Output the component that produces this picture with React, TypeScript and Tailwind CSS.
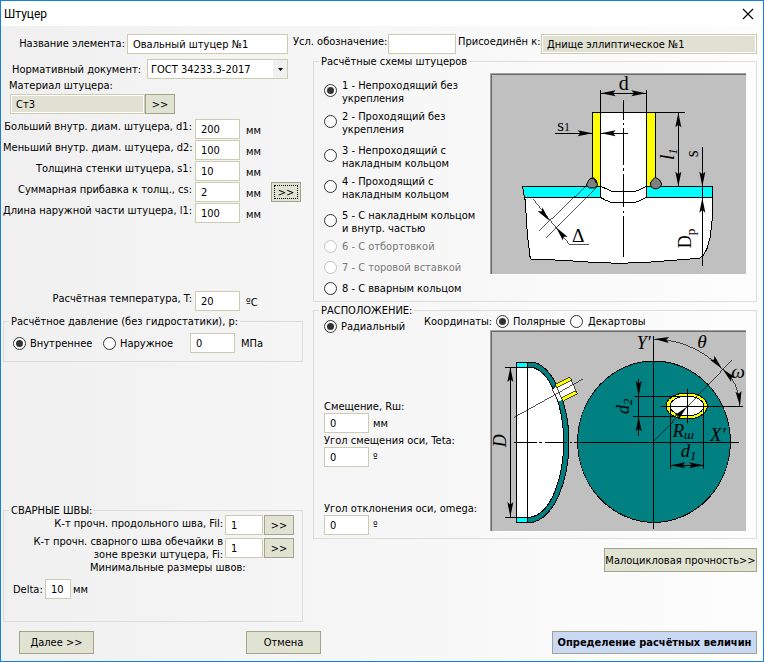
import { useState } from "react";
import type { ReactNode } from "react";

const inputClass =
  "h-5 border border-[#cbccb0] bg-white px-[5px] text-black outline-none focus:border-[#a0a18a]";
const readonlyClass =
  "h-5 border border-[#cbccb0] bg-[#e0e1d2] px-[5px] text-black outline-none shadow-[inset_0_0_0_1px_#fff]";
const buttonClass = "border border-[#a3a48c] bg-[#e0e2d2] text-black hover:bg-[#e8eadb]";
const radioClass =
  "grid size-[13px] shrink-0 appearance-none place-content-center rounded-full border border-[#333] bg-white before:size-[7px] before:rounded-full before:content-[''] checked:before:bg-[#333] disabled:border-[#c4c4c4]";

const schemes = [
  [
    { id: 1, lines: ["1 - Непроходящий без", "укрепления"] },
    { id: 2, lines: ["2 - Проходящий без", "укрепления"] },
  ],
  [
    { id: 3, lines: ["3 - Непроходящий с", "накладным кольцом"] },
    { id: 4, lines: ["4 - Проходящий с", "накладным кольцом"] },
  ],
  [
    { id: 5, lines: ["5 - С накладным кольцом", "и внутр. частью"] },
    { id: 6, lines: ["6 - С отбортовкой"], disabled: true },
  ],
  [{ id: 7, lines: ["7 - С торовой вставкой"], disabled: true }],
  [{ id: 8, lines: ["8 - С вварным кольцом"] }],
];

const sizes = [
  { id: "d1", label: "Больший внутр. диам. штуцера, d1:", value: "200" },
  { id: "d2", label: "Меньший внутр. диам. штуцера, d2:", value: "100" },
  { id: "s1", label: "Толщина стенки штуцера, s1:", value: "10" },
  { id: "cs", label: "Суммарная прибавка к толщ., cs:", value: "2", more: true },
  { id: "l1", label: "Длина наружной части штуцера, l1:", value: "100" },
];

function SizeRow({ id, label, value, unit, children }: { id: string; label: string; value: string; unit: string; children?: ReactNode }) {
  return (
    <div className="flex h-5">
      <label htmlFor={id} className="mr-[3px] w-[189px] pt-px text-right">
        {label}
      </label>
      <input id={id} defaultValue={value} className={`${inputClass} w-[45px]`} />
      <span className="mx-[6px] w-[19px] self-end pb-[2px]">{unit}</span>
      {children}
    </div>
  );
}

function OffsetField({ id, label, unit }: { id: string; label: string; unit: string }) {
  return (
    <div>
      <label htmlFor={id} className="block">
        {label}
      </label>
      <div className="flex items-center gap-1">
        <input id={id} defaultValue="0" className={`${inputClass} w-[45px]`} />
        <span>{unit}</span>
      </div>
    </div>
  );
}

// arrow head with its tip at x, y; angle 0 points right
function Arrow({ x, y, angle }: { x: number; y: number; angle: number }) {
  return <path d="M0 0 L-44 -9 L-36 0 L-44 9 Z" fill="#000" stroke="none" transform={`translate(${x} ${y}) rotate(${angle})`} />;
}

function NozzleDrawing() {
  return (
    <svg viewBox="12 15 771 606" className="h-[202px] w-[257px] shrink-0" role="img" aria-label="Расчётная схема">
      <rect x="12" y="15" width="771" height="606" fill="#c0c0c0" />
      <g stroke="#000" strokeWidth="3" fill="none" shapeRendering="crispEdges">
        <path d="M110 355 L343 355 L343 133 H481 V355 H679 V450 L673 505 L664 540 L652 562 L640 571 L560 577 L481 583 L400 586 L320 583 L230 577 L133 573 L124 500 L118 400 Z" fill="#fff" />
        <path d="M110 355 H343 V388 H115 Z" fill="#00ffff" />
        <path d="M481 355 H679 V388 H481 Z" fill="#00ffff" />
        <rect x="320" y="133" width="23" height="222" fill="#ffff00" />
        <rect x="481" y="133" width="27" height="222" fill="#ffff00" />
        <path d="M343 355 L358 361 L376 370 H448 L466 363 L481 355" />
        <path d="M343 388 L358 396 L374 403 H448 L466 396 L481 388" />
        <path d="M343 66 V133 M481 66 V133 M343 76 H481" />
        <path d="M207 196 H320 M343 196 H426" />
        <path d="M508 133 H597 M577 133 V355" />
        <path d="M649 237 V594" />
        <path d="M412 96 V156 M412 165 V172 M412 180 V290 M412 300 V308 M412 318 V418 M412 428 V435 M412 445 V567" />
        <path d="M302 352 L160 488 M334 355 L180 509" strokeWidth="2" />
        <path d="M142 394 L250 529 H308" strokeWidth="2" />
      </g>
      <g stroke="#000" strokeWidth="3" fill="#808080">
        <path d="M301 351 L309 335 L320 328 L331 337 L335 352 L325 360 H310 Z" />
        <path d="M313 332 L325 332 L330 345" fill="none" />
        <path d="M508 328 L521 336 L527 348 L523 357 L514 362 H504 L495 356 L493 345 L500 335 Z" />
      </g>
      <Arrow x={345} y={76} angle={180} />
      <Arrow x={480} y={76} angle={0} />
      <Arrow x={319} y={196} angle={0} />
      <Arrow x={345} y={196} angle={180} />
      <Arrow x={577} y={134} angle={-90} />
      <Arrow x={577} y={355} angle={90} />
      <Arrow x={649} y={355} angle={90} />
      <Arrow x={649} y={390} angle={-90} />
      <Arrow x={190} y={458} angle={51} />
      <Arrow x={210} y={478} angle={-129} />
      <g fill="#000" className="font-['Liberation_Serif',serif]">
        <text x="398" y="67" fontSize="60">d</text>
        <text x="214" y="188" fontSize="52">s<tspan fontSize="36">1</tspan></text>
        <text transform="translate(565 276) rotate(-90)" fontSize="60" fontStyle="italic">l<tspan fontSize="36" dy="8">1</tspan></text>
        <text transform="translate(636 268) rotate(-90)" fontSize="54">s</text>
        <text transform="translate(614 541) rotate(-90)" fontSize="54">D<tspan fontSize="40" dy="12">p</tspan></text>
        <text x="258" y="522" fontSize="58">Δ</text>
      </g>
      <path d="M13.500 621 V16.500 H783" fill="none" stroke="#a0a0a0" strokeWidth="3" />
      <path d="M16.500 618 V19.500 H780" fill="none" stroke="#696969" strokeWidth="3" />
      <path d="M12 619.500 H781.500 V15" fill="none" stroke="#fff" strokeWidth="3" />
    </svg>
  );
}

function LocationDrawing() {
  return (
    <svg viewBox="12 76 771 606" className="h-[202px] w-[257px] shrink-0" role="img" aria-label="Расположение штуцера">
      <rect x="12" y="76" width="771" height="606" fill="#c0c0c0" />
      <g stroke="#000" strokeWidth="3" fill="none" shapeRendering="crispEdges">
        <path d="M124 172 H143 C205 190 249 300 249 412 C249 530 205 635 143 652 H124 V637 H136 C195 625 233 520 233 412 C233 305 195 200 136 187 H124 Z" fill="#008080" />
        <path d="M92 187 H136 C195 200 233 305 233 412 C233 520 195 625 136 637 H92 Z" fill="#fff" />
        <rect x="92" y="172" width="32" height="15" fill="#00ffff" />
        <rect x="92" y="637" width="32" height="15" fill="#00ffff" />
        <path d="M124 172 V652" />
        <path d="M199 255 L252 219 L273 265 L219 291 Z" fill="#fff" stroke="none" />
        <path d="M208 239 L251 218 L257 226 L213 249 Z" fill="#ffff00" strokeWidth="2" />
        <path d="M226 280 L268 259 L274 267 L231 290 Z" fill="#ffff00" strokeWidth="2" />
        <path d="M255 224 L271 262 M213 248 L227 282 M199 256 L216 290 M207 241 L199 256" strokeWidth="2" />
        <path d="M85 338 L291 223" strokeWidth="2" />
        <path d="M57 187 H92 M57 637 H92 M73 187 V637" />
        <path d="M85 412 H153 M160 412 H168 M176 412 H242 M252 412 H258" />
        <ellipse cx="504" cy="411" rx="229" ry="242" fill="#008080" />
        <path d="M264 412 H760 M502 93 V672" />
        <ellipse cx="602" cy="304" rx="62" ry="39" fill="#ffff00" />
        <ellipse cx="603" cy="304" rx="50" ry="30" fill="#fff" />
        <path d="M525 304 H771 M604 252 V355" />
        <path d="M502 412 L738 166" strokeWidth="2" />
        <path d="M443 274 H602 M441 334 H560 M458 222 V393" />
        <path d="M553 310 V492 M653 310 V492 M553 482 H653" />
        <path d="M505 103 C590 106 655 140 709 193 C743 219 758 252 762 304" strokeWidth="2" />
      </g>
      <Arrow x={73} y={188} angle={-90} />
      <Arrow x={73} y={636} angle={90} />
      <Arrow x={458} y={273} angle={90} />
      <Arrow x={458} y={336} angle={-90} />
      <Arrow x={554} y={482} angle={180} />
      <Arrow x={653} y={482} angle={0} />
      <Arrow x={602} y={307} angle={-46} />
      <Arrow x={505} y={103} angle={184} />
      <Arrow x={708} y={192} angle={48} />
      <Arrow x={710} y={194} angle={-136} />
      <Arrow x={762} y={304} angle={84} />
      <g fill="#000" className="font-['Liberation_Serif',serif]" fontStyle="italic">
        <text x="452" y="134" fontSize="54">Y′</text>
        <text x="634" y="130" fontSize="58">θ</text>
        <text x="736" y="221" fontSize="58">ω</text>
        <text x="672" y="408" fontSize="56">X′</text>
        <text x="560" y="396" fontSize="56">R<tspan fontSize="40" dy="8">ш</tspan></text>
        <text x="584" y="458" fontSize="56">d<tspan fontSize="38" dy="8">1</tspan></text>
        <text transform="translate(430 328) rotate(-90)" fontSize="54">d<tspan fontSize="38" dy="8">2</tspan></text>
        <text transform="translate(59 428) rotate(-90)" fontSize="54">D</text>
      </g>
      <path d="M13.500 682 V77.500 H783" fill="none" stroke="#a0a0a0" strokeWidth="3" />
      <path d="M16.500 679 V80.500 H780" fill="none" stroke="#696969" strokeWidth="3" />
      <path d="M12 680.500 H781.500 V76" fill="none" stroke="#fff" strokeWidth="3" />
    </svg>
  );
}

export default function App() {
  const [scheme, setScheme] = useState(1);
  const [pressure, setPressure] = useState("in");
  const [coords, setCoords] = useState("polar");

  return (
    <div className="flex min-h-screen flex-col border border-[#1a7fd4] bg-linear-to-r from-[#f0f0f0] to-[#fdfdfd] font-['DejaVu_Sans_Condensed','DejaVu_Sans',sans-serif] text-[11px] leading-[13px] whitespace-nowrap text-black">
      <header className="flex h-[25px] items-center justify-between bg-white pr-[9px] pl-[3px]">
        <h1 className="font-[Roboto,'Noto_Sans',sans-serif] text-[12px] leading-4">Штуцер</h1>
        <button type="button" aria-label="Закрыть" className="size-3">
          <svg viewBox="0 0 12 12" className="size-3" stroke="#000" strokeWidth="1.100">
            <path d="M1 1 L11 11 M11 1 L1 11" />
          </svg>
        </button>
      </header>

      <main className="flex flex-1 flex-col pr-[6px] pb-[7px]">
        <div className="flex pt-2">
          <label htmlFor="name" className="mr-[2px] w-[124px] pt-[3px] text-right">Название элемента:</label>
          <input id="name" defaultValue="Овальный штуцер №1" className={`${inputClass} w-[161px]`} />
          <label htmlFor="mark" className="w-[100px] pt-px pl-[5px]">Усл. обозначение:</label>
          <input id="mark" className={`${inputClass} w-[68px]`} />
          <label htmlFor="parent" className="w-[85px] pt-px pl-[2px]">Присоединён к:</label>
          <input id="parent" readOnly value="Днище эллиптическое №1" className={`${readonlyClass} min-w-0 flex-1`} />
        </div>

        <div className="flex gap-[10px] pt-px pl-[2px]">
          <div className="w-[300px] shrink-0">
            <div className="flex items-center gap-[6px] pt-1">
              <label htmlFor="norm" className="w-[138px] text-right">Нормативный документ:</label>
              <div className="relative">
                <select id="norm" className={`${inputClass} w-[141px] appearance-none pl-[3px]`}>
                  <option>ГОСТ 34233.3-2017</option>
                </select>
                <span className="pointer-events-none absolute top-px right-px grid h-[18px] w-[14px] place-content-center bg-[#f0f0f0]">
                  <svg viewBox="0 0 5 3" className="h-[3px] w-[5px]">
                    <path d="M0 0 H5 L2.500 3 Z" />
                  </svg>
                </span>
              </div>
            </div>

            <label htmlFor="material" className="block pl-[6px]">Материал штуцера:</label>
            <div className="flex pt-[2px] pl-[7px]">
              <input id="material" readOnly value="Ст3" className={`${readonlyClass} w-[135px]`} />
              <button type="button" aria-label="Выбрать материал" className={`${buttonClass} h-5 w-[30px]`}>&gt;&gt;</button>
            </div>

            <div className="flex flex-col gap-px pt-[5px]">
              {sizes.map((s) => (
                <SizeRow key={s.id} id={s.id} label={s.label} value={s.value} unit="мм">
                  {s.more && (
                    <button type="button" aria-label="Рассчитать прибавку" className={`${buttonClass} h-5 w-[30px] p-[2px]`}>
                      <span className="flex h-full items-center justify-center border border-dotted border-black">&gt;&gt;</span>
                    </button>
                  )}
                </SizeRow>
              ))}
            </div>

            <div className="pt-[68px]">
              <SizeRow id="temp" label="Расчётная температура, T:" value="20" unit="ºC" />
            </div>

            <fieldset className="mt-1 border border-[#dcdcdc] px-[9px] pb-2">
              <legend className="-ml-1 px-[2px]">Расчётное давление (без гидростатики), p:</legend>
              <div className="flex items-center pt-[5px]">
                <label className="flex w-[90px] items-center gap-1">
                  <input type="radio" name="pressure" className={radioClass} checked={pressure === "in"} onChange={() => setPressure("in")} />
                  Внутреннее
                </label>
                <label className="flex w-[87px] items-center gap-1">
                  <input type="radio" name="pressure" className={radioClass} checked={pressure === "out"} onChange={() => setPressure("out")} />
                  Наружное
                </label>
                <input aria-label="Давление" defaultValue="0" className={`${inputClass} w-[45px]`} />
                <span className="pl-[6px]">МПа</span>
              </div>
            </fieldset>

            <fieldset className="mt-[142px] border border-[#dcdcdc] pr-2 pb-[22px] pl-[9px]">
              <legend className="-ml-1 px-[2px]">СВАРНЫЕ ШВЫ:</legend>
              <div className="-mt-[2px] flex justify-end">
                <label htmlFor="fil" className="pt-[2px] pr-[2px]">К-т прочн. продольного шва, Fil:</label>
                <input id="fil" defaultValue="1" className={`${inputClass} mr-px w-[38px]`} />
                <button type="button" aria-label="Рассчитать Fil" className={`${buttonClass} h-5 w-[30px]`}>&gt;&gt;</button>
              </div>
              <div className="flex items-center justify-end">
                <label htmlFor="fi" className="pr-[2px] text-right">
                  К-т прочн. сварного шва обечайки в
                  <br />
                  зоне врезки штуцера, Fi:
                </label>
                <input id="fi" defaultValue="1" className={`${inputClass} mr-px w-[38px]`} />
                <button type="button" aria-label="Рассчитать Fi" className={`${buttonClass} h-5 w-[30px]`}>&gt;&gt;</button>
              </div>
              <p className="pl-[77px]">Минимальные размеры швов:</p>
              <div className="flex items-center pt-[5px]">
                <label htmlFor="delta" className="w-8">Delta:</label>
                <input id="delta" defaultValue="10" className={`${inputClass} w-[26px]`} />
                <span className="pl-[2px]">мм</span>
              </div>
            </fieldset>
          </div>

          <div className="flex flex-1 flex-col">
            <fieldset className="border border-[#dcdcdc] pr-[9px] pb-[6px] pl-[10px]">
              <legend className="-ml-[5px] px-[2px]">Расчётные схемы штуцеров</legend>
              <div className="flex justify-between pt-[5px]">
                <div className="flex flex-col gap-2 pt-[6px]">
                  {schemes.map((group) => (
                    <div key={group[0].id} className="flex flex-col gap-[5px]">
                      {group.map((item) => (
                        <label key={item.id} className={`flex gap-[5px] ${item.disabled ? "text-[#787878]" : ""}`}>
                          <input
                            type="radio"
                            name="scheme"
                            className={`${radioClass} ${item.lines.length > 1 ? "mt-[5px]" : ""}`}
                            disabled={item.disabled}
                            checked={scheme === item.id}
                            onChange={() => setScheme(item.id)}
                          />
                          <span>
                            {item.lines.map((line) => (
                              <span key={line} className="block">{line}</span>
                            ))}
                          </span>
                        </label>
                      ))}
                    </div>
                  ))}
                </div>
                <NozzleDrawing />
              </div>
            </fieldset>

            <fieldset className="mt-[2px] border border-[#dcdcdc] pr-[9px] pb-[3px] pl-[10px]">
              <legend className="-ml-[5px] px-[2px]">РАСПОЛОЖЕНИЕ:</legend>
              <div className="-mt-[2px] flex">
                <div className="flex w-[100px] flex-col pt-[5px]">
                  <label className="flex items-center gap-1">
                    <input type="radio" name="location" className={radioClass} defaultChecked />
                    Радиальный
                  </label>
                  <div className="flex flex-col gap-px pt-[67px]">
                    <OffsetField id="rsh" label="Смещение, Rш:" unit="мм" />
                    <OffsetField id="teta" label="Угол смещения оси, Teta:" unit="º" />
                  </div>
                  <div className="pt-[35px]">
                    <OffsetField id="omega" label="Угол отклонения оси, omega:" unit="º" />
                  </div>
                </div>
                <div className="flex flex-1 flex-col gap-[2px]">
                  <div className="flex items-center">
                    <span className="w-[72px]">Координаты:</span>
                    <label className="flex w-[74px] items-center gap-1">
                      <input type="radio" name="coords" className={radioClass} checked={coords === "polar"} onChange={() => setCoords("polar")} />
                      Полярные
                    </label>
                    <label className="flex items-center gap-[5px]">
                      <input type="radio" name="coords" className={radioClass} checked={coords === "cartesian"} onChange={() => setCoords("cartesian")} />
                      Декартовы
                    </label>
                  </div>
                  <div className="flex justify-end">
                    <LocationDrawing />
                  </div>
                </div>
              </div>
            </fieldset>

            <button type="button" className={`${buttonClass} mt-[9px] h-6 w-[153px] self-end`}>Малоцикловая прочность&gt;&gt;</button>
          </div>
        </div>

        <footer className="mt-auto flex pt-2 pl-[18px]">
          <button type="button" className={`${buttonClass} mr-[152px] h-[23px] w-[75px]`}>Далее &gt;&gt;</button>
          <button type="button" className={`${buttonClass} h-[23px] w-[75px]`}>Отмена</button>
          <button type="button" className="ml-auto h-[23px] w-[205px] border border-[#a3a48c] bg-[#c9d8f3] font-bold text-black hover:bg-[#d7e2f6]">
            Определение расчётных величин
          </button>
        </footer>
      </main>
    </div>
  );
}
